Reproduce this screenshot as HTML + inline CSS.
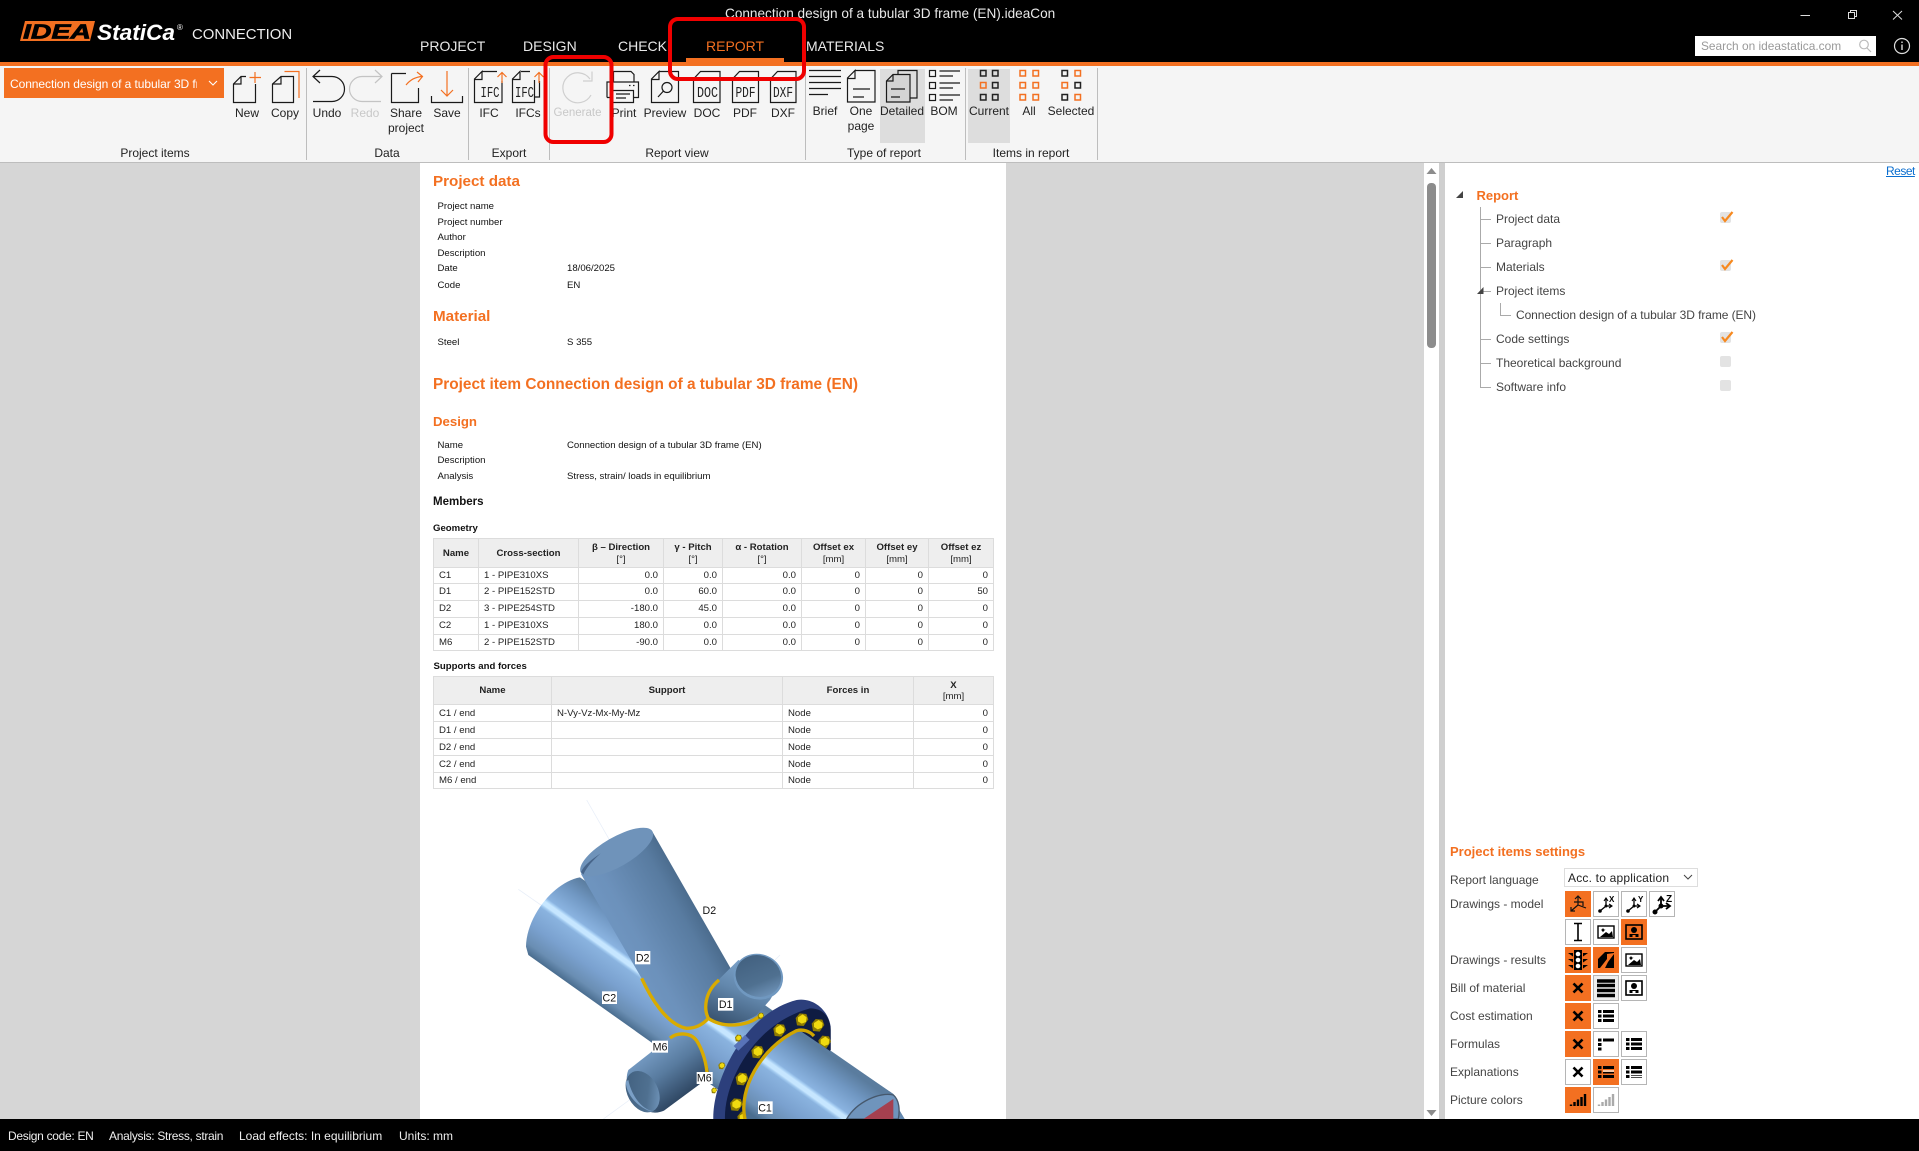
<!DOCTYPE html>
<html lang="en"><head><meta charset="utf-8"><title>Connection design of a tubular 3D frame (EN).ideaCon</title>
<style>
*{box-sizing:border-box}
html,body{margin:0;padding:0;width:1919px;height:1151px;overflow:hidden;background:#d6d6d6;font-family:"Liberation Sans",Arial,sans-serif}
.a{position:absolute}
.t{position:absolute;white-space:nowrap;line-height:16px;height:16px}
.m{position:absolute;top:38px;font-size:14px;line-height:16px;color:#e8e8e8;white-space:nowrap}
.l{position:absolute;transform:translateX(-50%);font-size:12px;line-height:15px;color:#222;white-space:nowrap;text-align:center}
.g{position:absolute;top:145px;transform:translateX(-50%);font-size:12px;line-height:16px;color:#222;white-space:nowrap}
.s{position:absolute;top:68px;width:1px;height:92px;background:#bdbdbd}
.r{position:absolute;font-size:9.6px;line-height:12px;color:#111;white-space:nowrap}
.h1{position:absolute;left:433px;font-weight:bold;color:#f37021;white-space:nowrap;line-height:20px}
.tr{position:absolute;left:1496px;font-size:12px;line-height:16px;color:#444;white-space:nowrap}
.ls{position:absolute;left:1450px;font-size:12px;line-height:16px;color:#444;white-space:nowrap}
table{position:absolute;left:433px;border-collapse:collapse;table-layout:fixed;font-size:9.6px;color:#222;width:560px}
td,th{border:1px solid #dcdcdc;padding:0 5px;line-height:11.5px;overflow:hidden;white-space:nowrap}
th{background:#eeeeee;text-align:center;font-weight:bold;padding-top:1px}
th span{font-weight:normal}
td.n{text-align:right}
.t2 td{padding-top:1px}
.chk{position:absolute;left:1720px;width:11px;height:11px;background:#e3e3e3;border-radius:2px}
</style></head><body>

<div class="a" style="left:0;top:0;width:1919px;height:62px;background:#000"></div>
<div class="a" style="left:0;top:62px;width:1919px;height:4px;background:#f37021"></div>
<div class="a" style="left:0;top:66px;width:1919px;height:96px;background:#f5f5f5"></div>
<div class="a" style="left:0;top:162px;width:1919px;height:1px;background:#bdbdbd"></div>
<div class="a" style="left:0;top:163px;width:1919px;height:957px;background:#d6d6d6"></div>

<div class="t" style="left:725px;top:6px;font-size:13.6px;color:#e8e8e8">Connection design of a tubular 3D frame (EN).ideaCon</div>
<div class="t" style="left:192px;top:27px;font-size:14.9px;color:#eee">CONNECTION</div>
<div class="m" style="left:420px">PROJECT</div>
<div class="m" style="left:523px">DESIGN</div>
<div class="m" style="left:618px">CHECK</div>
<div class="m" style="left:706px;color:#f37021">REPORT</div>
<div class="a" style="left:686px;top:58px;width:98px;height:4px;background:#f37021"></div>
<div class="m" style="left:806px">MATERIALS</div>

<div class="a" style="left:1695px;top:36px;width:181px;height:20px;background:#fff"></div>
<div class="t" style="left:1701px;top:38px;font-size:11.9px;color:#999">Search on ideastatica.com</div>

<div class="a" style="left:4px;top:68px;width:220px;height:30px;background:#f37021"></div>
<div class="t" style="left:10px;top:76px;width:187px;overflow:hidden;font-size:12px;color:#fff;letter-spacing:-.07px">Connection design of a tubular 3D frame (EN)</div>

<div class="l" style="left:247px;top:106px">New</div>
<div class="l" style="left:285px;top:106px">Copy</div>
<div class="l" style="left:327px;top:106px">Undo</div>
<div class="l" style="left:365px;top:106px;color:#c8c8c8">Redo</div>
<div class="l" style="left:406px;top:106px">Share<br>project</div>
<div class="l" style="left:447px;top:106px">Save</div>
<div class="l" style="left:489px;top:106px">IFC</div>
<div class="l" style="left:528px;top:106px">IFCs</div>
<div class="l" style="left:577.5px;top:106px;color:#c8c8c8;font-size:11.5px">Generate</div>
<div class="l" style="left:624px;top:106px">Print</div>
<div class="l" style="left:665px;top:106px">Preview</div>
<div class="l" style="left:707px;top:106px">DOC</div>
<div class="l" style="left:745px;top:106px">PDF</div>
<div class="l" style="left:783px;top:106px">DXF</div>
<div class="a" style="left:880px;top:69px;width:45px;height:74px;background:#dddddd"></div>
<div class="a" style="left:968px;top:69px;width:42px;height:74px;background:#dddddd"></div>
<div class="l" style="left:825px;top:104px">Brief</div>
<div class="l" style="left:861px;top:104px">One<br>page</div>
<div class="l" style="left:902px;top:104px">Detailed</div>
<div class="l" style="left:944px;top:104px">BOM</div>
<div class="l" style="left:989px;top:104px">Current</div>
<div class="l" style="left:1029px;top:104px">All</div>
<div class="l" style="left:1071px;top:104px">Selected</div>

<div class="g" style="left:155px">Project items</div>
<div class="g" style="left:387px">Data</div>
<div class="g" style="left:509px">Export</div>
<div class="g" style="left:677px">Report view</div>
<div class="g" style="left:884px">Type of report</div>
<div class="g" style="left:1031px">Items in report</div>
<div class="s" style="left:306px"></div><div class="s" style="left:468px"></div><div class="s" style="left:549px"></div><div class="s" style="left:805px"></div><div class="s" style="left:965px"></div><div class="s" style="left:1097px"></div>

<!-- report page -->
<div class="a" style="left:420px;top:163px;width:585.5px;height:957px;background:#fff"></div>
<div class="h1" style="top:172px;font-size:15.2px">Project data</div>
<div class="r" style="left:437.5px;top:201px">Project name</div>
<div class="r" style="left:437.5px;top:217px">Project number</div>
<div class="r" style="left:437.5px;top:232px">Author</div>
<div class="r" style="left:437.5px;top:248px">Description</div>
<div class="r" style="left:437.5px;top:263px">Date</div><div class="r" style="left:567px;top:263px">18/06/2025</div>
<div class="r" style="left:437.5px;top:280px">Code</div><div class="r" style="left:567px;top:280px">EN</div>
<div class="h1" style="top:307px;font-size:15.2px">Material</div>
<div class="r" style="left:437.5px;top:337px">Steel</div><div class="r" style="left:567px;top:337px">S 355</div>
<div class="h1" style="top:375px;font-size:15.4px">Project item Connection design of a tubular 3D frame (EN)</div>
<div class="h1" style="top:412px;font-size:13.2px">Design</div>
<div class="r" style="left:437.5px;top:440px">Name</div><div class="r" style="left:567px;top:440px">Connection design of a tubular 3D frame (EN)</div>
<div class="r" style="left:437.5px;top:455px">Description</div>
<div class="r" style="left:437.5px;top:471px">Analysis</div><div class="r" style="left:567px;top:471px">Stress, strain/ loads in equilibrium</div>
<div class="r" style="left:433px;top:495px;font-size:11.5px;font-weight:bold;line-height:14px">Members</div>
<div class="r" style="left:433px;top:522.5px;font-weight:bold">Geometry</div>

<table style="top:538px">
<colgroup><col style="width:45px"><col style="width:100px"><col style="width:85px"><col style="width:59px"><col style="width:79px"><col style="width:64px"><col style="width:63px"><col style="width:65px"></colgroup>
<tr style="height:29px"><th>Name</th><th>Cross-section</th><th>β – Direction<br><span>[°]</span></th><th>γ - Pitch<br><span>[°]</span></th><th>α - Rotation<br><span>[°]</span></th><th>Offset ex<br><span>[mm]</span></th><th>Offset ey<br><span>[mm]</span></th><th>Offset ez<br><span>[mm]</span></th></tr>
<tr style="height:16px"><td>C1</td><td>1 - PIPE310XS</td><td class="n">0.0</td><td class="n">0.0</td><td class="n">0.0</td><td class="n">0</td><td class="n">0</td><td class="n">0</td></tr>
<tr style="height:17px"><td>D1</td><td>2 - PIPE152STD</td><td class="n">0.0</td><td class="n">60.0</td><td class="n">0.0</td><td class="n">0</td><td class="n">0</td><td class="n">50</td></tr>
<tr style="height:17px"><td>D2</td><td>3 - PIPE254STD</td><td class="n">-180.0</td><td class="n">45.0</td><td class="n">0.0</td><td class="n">0</td><td class="n">0</td><td class="n">0</td></tr>
<tr style="height:17px"><td>C2</td><td>1 - PIPE310XS</td><td class="n">180.0</td><td class="n">0.0</td><td class="n">0.0</td><td class="n">0</td><td class="n">0</td><td class="n">0</td></tr>
<tr style="height:16px"><td>M6</td><td>2 - PIPE152STD</td><td class="n">-90.0</td><td class="n">0.0</td><td class="n">0.0</td><td class="n">0</td><td class="n">0</td><td class="n">0</td></tr>
</table>

<div class="r" style="left:433.5px;top:661px;font-weight:bold">Supports and forces</div>

<table class="t2" style="top:676px">
<colgroup><col style="width:118px"><col style="width:231px"><col style="width:131px"><col style="width:80px"></colgroup>
<tr style="height:28px"><th>Name</th><th>Support</th><th>Forces in</th><th>X<br><span>[mm]</span></th></tr>
<tr style="height:17px"><td>C1 / end</td><td>N-Vy-Vz-Mx-My-Mz</td><td>Node</td><td class="n">0</td></tr>
<tr style="height:17px"><td>D1 / end</td><td></td><td>Node</td><td class="n">0</td></tr>
<tr style="height:17px"><td>D2 / end</td><td></td><td>Node</td><td class="n">0</td></tr>
<tr style="height:17px"><td>C2 / end</td><td></td><td>Node</td><td class="n">0</td></tr>
<tr style="height:16px"><td>M6 / end</td><td></td><td>Node</td><td class="n">0</td></tr>
</table>

<!-- 3D model -->
<svg class="a" style="left:480px;top:800px" width="480" height="319" viewBox="0 0 1440 957">
<defs>
<linearGradient id="gm" gradientUnits="userSpaceOnUse" x1="500" y1="374" x2="337" y2="602">
<stop offset="0" stop-color="#5a7c9e"/><stop offset=".18" stop-color="#7097c2"/><stop offset=".39" stop-color="#8ab3e0"/><stop offset=".41" stop-color="#a5cdf2"/><stop offset=".43" stop-color="#c6e6ff"/><stop offset=".47" stop-color="#c6e6ff"/><stop offset=".49" stop-color="#a0c8ee"/><stop offset=".51" stop-color="#8ab3df"/><stop offset=".72" stop-color="#7aa1cf"/><stop offset=".9" stop-color="#6a8eb3"/><stop offset="1" stop-color="#4a6d8f"/>
</linearGradient>
<linearGradient id="gd" gradientUnits="userSpaceOnUse" x1="700" y1="250" x2="380" y2="430">
<stop offset="0" stop-color="#36536f"/><stop offset=".35" stop-color="#587ba0"/><stop offset=".75" stop-color="#6c91bb"/><stop offset="1" stop-color="#7097c2"/>
</linearGradient>
<linearGradient id="gt" gradientUnits="userSpaceOnUse" x1="810" y1="480" x2="730" y2="680">
<stop offset="0" stop-color="#7ea5cd"/><stop offset=".45" stop-color="#6388ad"/><stop offset="1" stop-color="#36506d"/>
</linearGradient>
<linearGradient id="gs" gradientUnits="userSpaceOnUse" x1="500" y1="740" x2="610" y2="890">
<stop offset="0" stop-color="#7aa0c9"/><stop offset=".5" stop-color="#587b9f"/><stop offset="1" stop-color="#2f4763"/>
</linearGradient>
<linearGradient id="gi" x1="0" y1="0" x2="1" y2="1">
<stop offset="0" stop-color="#3f5d7c"/><stop offset=".6" stop-color="#4f7090"/><stop offset="1" stop-color="#7da3cb"/>
</linearGradient>
<g id="bolt"><polygon points="-18,-6 -6,-20 14,-18 20,-2 6,18 -14,16" fill="#8f7c00"/><polygon points="-11,-8 3,-17 15,-8 13,6 0,11 -11,4" fill="#f0da10"/></g>
</defs>
<g stroke="#e6edf8" stroke-width="2" fill="none"><path d="M320 0L400 140"/><path d="M115 268L190 320"/><path d="M370 957L455 895"/><path d="M885 480L900 465"/></g>
<path fill="url(#gm)" d="M300 232C225 245 140 345 138 440L145 465L800 930L900 1000L1300 1000L1258 930L1240 882Z"/>
<path fill="url(#gd)" d="M303 222L485 535C510 590 560 670 620 685C650 685 675 670 690 650L775 520L752 505L517 95C470 92 340 160 303 222Z"/>
<ellipse cx="410" cy="156" rx="124" ry="44" transform="rotate(-30 410 156)" fill="#6f93ba"/>
<path d="M303 216C312 196 335 178 362 160C340 180 320 200 310 224Z" fill="#47658a"/>
<path d="M485 535C510 590 560 675 620 685C650 685 670 672 685 655" fill="none" stroke="#d9ab00" stroke-width="10"/>
<path fill="url(#gs)" d="M570 712L445 810C425 860 470 935 525 938C535 938 545 935 552 932L690 830C680 770 655 715 610 698C595 698 580 702 570 712Z"/>
<ellipse cx="488" cy="875" rx="46" ry="66" transform="rotate(-28 488 875)" fill="url(#gi)"/>
<path d="M445 840C455 890 490 935 530 935C500 940 440 900 437 845Z" fill="#7a9fc6"/>
<path d="M570 714C590 698 630 695 650 722C668 750 680 790 682 830" fill="none" stroke="#d9ab00" stroke-width="10"/>
<path fill="url(#gt)" d="M715 540L775 480L905 540L870 600L830 645C790 672 730 680 685 655C670 625 680 575 715 540Z"/>
<ellipse cx="835" cy="530" rx="75" ry="68" transform="rotate(20 835 530)" fill="#7098c0"/>
<ellipse cx="835" cy="528" rx="69" ry="62" transform="rotate(20 835 528)" fill="url(#gi)"/>
<path d="M840 648C800 680 730 685 685 655C670 625 675 575 717 540" fill="none" stroke="#d9ab00" stroke-width="10"/>
<path fill="#2c3f7c" d="M700 960C695 850 790 640 950 600C1000 592 1045 630 1052 680L1052 750L1000 800L800 960Z"/>
<path fill="#0f1c42" d="M735 960C730 850 820 670 990 625C1030 625 1050 650 1052 690L1052 750L900 900L800 960Z"/>
<path d="M768 745L802 712" stroke="#5873b8" stroke-width="20"/>
<use href="#bolt" transform="translate(775 715) scale(.55)"/><use href="#bolt" transform="translate(725 798) scale(.55)"/><use href="#bolt" transform="translate(702 872) scale(.45)"/><use href="#bolt" transform="translate(842 648) scale(.5)"/>
<use href="#bolt" transform="translate(965 660)"/><use href="#bolt" transform="translate(1013 677)"/><use href="#bolt" transform="translate(1033 727)"/><use href="#bolt" transform="translate(898 692)"/><use href="#bolt" transform="translate(832 757)"/><use href="#bolt" transform="translate(785 838)"/><use href="#bolt" transform="translate(768 915)"/><use href="#bolt" transform="translate(790 955)"/>
<path fill="url(#gm)" d="M800 960C775 870 840 745 960 692L1240 882C1258 900 1262 930 1255 960Z"/>
<path d="M795 957C775 870 840 745 950 692C970 686 990 695 1002 708" fill="none" stroke="#d0a500" stroke-width="10"/>
<path d="M1100 957C1130 905 1200 875 1240 885C1258 900 1260 930 1255 957Z" fill="#6f94bc" stroke="#46586c" stroke-width="4"/>
<path d="M1150 957L1240 897L1240 957Z" fill="#a5404f"/>
<g font-family="Liberation Sans,Arial,sans-serif" font-size="32" fill="#111" text-anchor="middle">
<text x="688" y="342">D2</text>
<rect x="465" y="453" width="46" height="40" fill="#fff"/><text x="488" y="484">D2</text>
<rect x="366" y="574" width="45" height="38" fill="#fff"/><text x="388" y="604">C2</text>
<rect x="714" y="594" width="46" height="38" fill="#fff"/><text x="737" y="624">D1</text>
<rect x="516" y="722" width="48" height="36" fill="#fff"/><text x="540" y="751">M6</text>
<rect x="650" y="816" width="48" height="36" fill="#fff"/><text x="673" y="845">M6</text>
<rect x="834" y="904" width="44" height="38" fill="#fff"/><text x="855" y="934">C1</text>
</g>
</svg>

<!-- scrollbar + right panel -->
<div class="a" style="left:1424px;top:163px;width:15px;height:957px;background:#fff"></div>
<div class="a" style="left:1427px;top:183px;width:9px;height:165px;background:#8c8c8c;border-radius:4px"></div>
<div class="a" style="left:1439px;top:163px;width:6px;height:957px;background:#cfcfcf"></div>
<div class="a" style="left:1445px;top:163px;width:474px;height:957px;background:#fff"></div>
<div class="t" style="left:1886px;top:163px;font-size:12px;letter-spacing:-.5px;color:#0a6ecf;text-decoration:underline">Reset</div>

<div class="t" style="left:1476.5px;top:188px;font-size:13px;font-weight:bold;color:#f37021">Report</div>
<div class="tr" style="top:211px">Project data</div>
<div class="tr" style="top:235px">Paragraph</div>
<div class="tr" style="top:259px">Materials</div>
<div class="tr" style="top:283px">Project items</div>
<div class="tr" style="top:307px;left:1516px;letter-spacing:-.08px">Connection design of a tubular 3D frame (EN)</div>
<div class="tr" style="top:331px">Code settings</div>
<div class="tr" style="top:355px">Theoretical background</div>
<div class="tr" style="top:379px">Software info</div>
<div class="chk" style="top:212px"></div><div class="chk" style="top:260px"></div><div class="chk" style="top:332px"></div><div class="chk" style="top:356px"></div><div class="chk" style="top:380px"></div>

<div class="t" style="left:1450px;top:844px;font-size:13px;font-weight:bold;color:#f37021">Project items settings</div>
<div class="ls" style="top:872px">Report language</div>
<div class="ls" style="top:896px">Drawings - model</div>
<div class="ls" style="top:952px">Drawings - results</div>
<div class="ls" style="top:980px">Bill of material</div>
<div class="ls" style="top:1008px">Cost estimation</div>
<div class="ls" style="top:1036px">Formulas</div>
<div class="ls" style="top:1064px">Explanations</div>
<div class="ls" style="top:1092px">Picture colors</div>
<div class="a" style="left:1564px;top:868px;width:134px;height:19px;background:#fff;border:1px solid #ddd"></div>
<div class="t" style="left:1568px;top:870px;font-size:12px;letter-spacing:.2px;color:#222">Acc. to application</div>

<!-- status bar -->
<div class="a" style="left:0;top:1119px;width:1919px;height:32px;background:#000"></div>
<div class="t" style="left:8px;top:1128px;font-size:12px;letter-spacing:-.3px;color:#eee">Design code: EN</div>
<div class="t" style="left:109px;top:1128px;font-size:12px;letter-spacing:-.3px;color:#eee">Analysis: Stress, strain</div>
<div class="t" style="left:239px;top:1128px;font-size:12px;color:#eee">Load effects: In equilibrium</div>
<div class="t" style="left:399px;top:1128px;font-size:12px;color:#eee">Units: mm</div>

<!-- vector overlay: logo, icons, tree lines, red boxes -->
<svg class="a" style="left:0;top:0" width="1919" height="1151" viewBox="0 0 1919 1151">
<defs>
<g id="x"><path d="M8.5 8.5L17.5 17.5M17.5 8.5L8.5 17.5" stroke="#000" stroke-width="2.6" fill="none"/></g>
<g id="list"><path d="M5 8.5h3.5M5 13h3.5M5 17.5h3.5" stroke="#000" stroke-width="3"/><path d="M10 8.5h11M10 13h11M10 17.5h11" stroke="#000" stroke-width="3"/></g>
<g id="pic"><rect x="5" y="7" width="16" height="12" fill="#fff" stroke="#000" stroke-width="1.4"/><path d="M7 18L13 13L16 15L19 12L20 18Z" fill="#000"/><path d="M9 10.5l1-1.5 1 1.5 1.5.3-1.5 1-1 1.5-1-1.5-1.2-1z" fill="#000"/></g>
<g id="per"><rect x="5" y="6" width="16" height="14" fill="none" stroke="#000" stroke-width="1.6"/><circle cx="13" cy="11" r="3" fill="#000"/><path d="M8.5 18v-3h9v3h-3v-2h-3v2z" fill="#000"/></g>
<g id="bars"><path d="M6 19v-1.5M9.5 19v-4M13 19v-6.5M16.5 19v-9M20 19v-12" stroke-width="2.4" fill="none"/></g>
<g id="ax"><path d="M13 8V15L18 15M13 15L7 20" stroke="#000" stroke-width="1.3" fill="none"/><circle cx="7" cy="20" r="1.8" fill="#000"/><circle cx="13" cy="15" r="1.5" fill="#000"/></g>
</defs>

<!-- logo -->
<path d="M25 21H95L90 41H20Z" fill="#f37021"/>
<text x="23" y="38.5" font-family="Liberation Sans,Arial,sans-serif" font-size="20" font-weight="bold" font-style="italic" fill="#000" stroke="#000" stroke-width=".7" textLength="68" lengthAdjust="spacingAndGlyphs">IDEA</text>
<text x="97" y="40" font-family="Liberation Sans,Arial,sans-serif" font-size="22" font-weight="bold" font-style="italic" fill="#fff" textLength="78" lengthAdjust="spacingAndGlyphs">StatiCa</text>
<text x="177" y="30" font-family="Liberation Sans,Arial,sans-serif" font-size="8" fill="#fff">®</text>

<!-- window controls -->
<g stroke="#ddd" stroke-width="1" fill="none">
<path d="M1800.5 15.5H1810"/>
<rect x="1848.5" y="12.5" width="6" height="6"/><path d="M1850.5 12V10.5H1856.5V16.5H1855"/>
<path d="M1893 11L1902 19.5M1902 11L1893 19.5"/>
<circle cx="1902" cy="46" r="7.5" stroke-width="1.2"/><path d="M1902 44.5V50M1902 41.5V43" stroke-width="1.4"/>
</g>
<g stroke="#bbb" stroke-width="1.2" fill="none"><circle cx="1864" cy="44.5" r="4.3"/><path d="M1867 48L1871 52"/></g>
<path d="M209 81L213 85L217 81" fill="none" stroke="#fff" stroke-width="1.1"/>

<!-- ribbon icons -->
<g fill="none" stroke="#1a1a1a" stroke-width="1.2">
<path d="M246 76.5H241L233.5 84V102.5H255.5V84"/><path d="M241 77V84H234"/>
<path d="M281 76.5L272.5 84V102.5H293.5V76.5Z"/><path d="M281 77V84H273" />
<path d="M313 76.5H332A12.5 12.5 0 0 1 332 101.5H313M320 70L313 76.5L320 83"/>
<path d="M391.5 73.5H406M418.5 88V102.5H391.5V73.5"/>
<path d="M431.5 96V102.5H462.5V96"/>
<path d="M482 71.5H497M502 81V102.5H474.5V79L482 71.5V79.5H475"/>
<path d="M521 71.5H530M534.5 80V102.5H512.5V79L520 71.5V79.5H513M534.5 97H539.5V81"/>
<!-- print -->
<path d="M613.5 82V71.5H631L634 74.5V82M607 97.5V82H638.5V97.5H633M612.5 97.5H607"/>
<path d="M612.5 90.5H633.5V102.5H612.5Z" fill="#f5f5f5"/><path d="M616 94H630M616 98H626M629 85.5h1.5M633 85.5h1.5"/>
<!-- preview -->
<path d="M659 71.5H678.5V102.5H651.5V79L659 71.5V79.5H652"/><circle cx="667" cy="87.5" r="5"/><path d="M663.5 91L658 97"/>
<!-- doc pdf dxf -->
<path d="M700.5 71.5H720V102.5H693.5V79Z"/><path d="M739.5 71.5H758.5V102.5H732.5V79Z"/><path d="M777.5 71.5H796V102.5H770.5V79Z"/>
<!-- brief -->
<path d="M809 70.5H841M809 76.5H841M809 82.5H841M809 88.5H841M809 94.5H828"/>
<!-- one page -->
<path d="M855 70.5H875V102H847.5V78L855 70.5V78.5H848M853 89H870M853 97H864"/>
<!-- detailed -->
<path d="M898 74V70.5H917V98H910"/>
<path d="M893 74.5H910V102H886.5V81L893 74.5Z" fill="#d4d4d4"/><path d="M893 75V81H887M891 89H905M891 97H900"/>
<!-- bom -->
<rect x="929.5" y="70.5" width="6" height="6"/><rect x="929.5" y="82.5" width="6" height="6"/><rect x="929.5" y="94.5" width="6" height="6"/>
<path d="M939.5 71H960M939.5 76H953M939.5 83H960M939.5 88H953M939.5 95H960M939.5 100H953"/>
</g>
<g fill="none" stroke="#f37021" stroke-width="1.2">
<path d="M255 72V83M249.5 77.5H261"/>
<path d="M284.5 71.5H299V98"/>
<path d="M406 85C410 80 415 77 422 76.5M417 72L422.5 76.5L418 82"/>
<path d="M447 71V96M441 90L447 96L453 90"/>
<path d="M502 83V72.5M497.5 77L502 72.5L506.5 77"/>
<path d="M539 83V72.5M534.5 77L539 72.5L543.5 77"/>
</g>
<path d="M382 76.5H362A12.5 12.5 0 0 0 362 101.5H381M375 70L382 76.5L375 83" fill="none" stroke="#c4c4c4" stroke-width="1.2"/>
<path d="M590 79A15 15 0 1 0 591 95" fill="none" stroke="#cfcfcf" stroke-width="1.2"/><path d="M592 71.5V81H583" fill="none" stroke="#cfcfcf" stroke-width="1.2"/>
<g font-family="Liberation Mono,monospace" font-size="15" fill="#222" text-anchor="middle">
<text x="490" y="97" textLength="19" lengthAdjust="spacingAndGlyphs">IFC</text>
<text x="524.5" y="97" textLength="19" lengthAdjust="spacingAndGlyphs">IFC</text>
<text x="707.5" y="97" textLength="21" lengthAdjust="spacingAndGlyphs">DOC</text>
<text x="745.5" y="97" textLength="20" lengthAdjust="spacingAndGlyphs">PDF</text>
<text x="783" y="97" textLength="20" lengthAdjust="spacingAndGlyphs">DXF</text>
</g>
<!-- items squares -->
<g fill="none" stroke-width="1.5" stroke="#222">
<rect x="980.5" y="70.5" width="5.5" height="5.5"/><rect x="992.5" y="70.5" width="5.5" height="5.5"/>
<rect x="980.5" y="82.5" width="5.5" height="5.5" stroke="#f37021"/><rect x="992.5" y="82.5" width="5.5" height="5.5"/>
<rect x="980.5" y="94.5" width="5.5" height="5.5"/><rect x="992.5" y="94.5" width="5.5" height="5.5"/>
<g stroke="#f37021"><rect x="1020" y="70.5" width="5.5" height="5.5"/><rect x="1033" y="70.5" width="5.5" height="5.5"/><rect x="1020" y="82.5" width="5.5" height="5.5"/><rect x="1033" y="82.5" width="5.5" height="5.5"/><rect x="1020" y="94.5" width="5.5" height="5.5"/><rect x="1033" y="94.5" width="5.5" height="5.5"/></g>
<rect x="1062" y="70.5" width="5.5" height="5.5"/><rect x="1075" y="70.5" width="5.5" height="5.5" stroke="#f37021"/>
<rect x="1062" y="82.5" width="5.5" height="5.5" stroke="#f37021"/><rect x="1075" y="82.5" width="5.5" height="5.5"/>
<rect x="1062" y="94.5" width="5.5" height="5.5"/><rect x="1075" y="94.5" width="5.5" height="5.5" stroke="#f37021"/>
</g>

<!-- scroll arrows -->
<path d="M1431.5 168L1426.5 174H1436.5Z" fill="#8c8c8c"/><path d="M1431.5 1116L1426.5 1110H1436.5Z" fill="#8c8c8c"/>

<!-- tree -->
<path d="M1463 191V198H1456Z" fill="#444"/>
<g stroke="#aaa" fill="none"><path d="M1480.5 207V387.5H1491M1481 219.5H1491M1481 243.5H1491M1481 267.5H1491M1481 291.5H1491M1481 339.5H1491M1481 363.5H1491M1500.5 303V315.5H1511"/></g>
<path d="M1483.5 287V294H1477Z" fill="#444"/>
<g fill="none" stroke="#f7891f" stroke-width="2.2"><path d="M1722 217L1725 221L1732.5 212"/><path d="M1722 265L1725 269L1732.5 260"/><path d="M1722 337L1725 341L1732.5 332"/></g>

<!-- select chevron -->
<path d="M1684 875L1688 879L1692 875" fill="none" stroke="#444" stroke-width="1"/>

<!-- setting buttons -->
<g stroke="#b5b5b5" stroke-width="1" fill="#fff">
<rect x="1593.5" y="891.5" width="25" height="25"/><rect x="1621.5" y="891.5" width="25" height="25"/><rect x="1649.5" y="891.5" width="25" height="25"/>
<rect x="1565.5" y="919.5" width="25" height="25"/><rect x="1593.5" y="919.5" width="25" height="25"/>
<rect x="1621.5" y="947.5" width="25" height="25"/>
<rect x="1593.5" y="975.5" width="25" height="25" fill="#eee"/><rect x="1621.5" y="975.5" width="25" height="25"/>
<rect x="1593.5" y="1003.5" width="25" height="25"/>
<rect x="1593.5" y="1031.5" width="25" height="25"/><rect x="1621.5" y="1031.5" width="25" height="25"/>
<rect x="1565.5" y="1059.5" width="25" height="25"/><rect x="1621.5" y="1059.5" width="25" height="25"/>
<rect x="1593.5" y="1087.5" width="25" height="25"/>
</g>
<g fill="#f37021">
<rect x="1565" y="891" width="26" height="26"/><rect x="1621" y="919" width="26" height="26"/>
<rect x="1565" y="947" width="26" height="26"/><rect x="1593" y="947" width="26" height="26"/>
<rect x="1565" y="975" width="26" height="26"/><rect x="1565" y="1003" width="26" height="26"/><rect x="1565" y="1031" width="26" height="26"/>
<rect x="1593" y="1059" width="26" height="26"/><rect x="1565" y="1087" width="26" height="26"/>
</g>
<!-- row 1 -->
<g transform="translate(1565 891)" fill="none" stroke="#111" stroke-width="1.2"><path d="M13 6V14M13 14L6 20M13 14L21 17M9 11L18 11L18 15M10 8l3-3 3 3M6 16v4h4"/></g>
<use href="#ax" x="1593" y="891"/><path d="M1606 893 M1604 901l2-3 2 3M1609 904l3 2-3 2" fill="none" stroke="#000" stroke-width="1.1"/>
<use href="#ax" x="1621" y="891"/><path d="M1632 901l2-3 2 3M1637 904l3 2-3 2" fill="none" stroke="#000" stroke-width="1.1"/>
<g transform="translate(1649 891)" fill="none" stroke="#000" stroke-width="1.8"><path d="M12 7V15L20 15M12 15L6 21"/><circle cx="6" cy="21" r="1.6" fill="#000"/><circle cx="12" cy="15" r="1.6" fill="#000"/><path d="M9 10l3-4 3 4M17 12l4 3-4 3"/></g>
<g font-family="Liberation Sans,Arial,sans-serif" font-weight="bold" fill="#000">
<text x="1609" y="902" font-size="8">X</text><text x="1638" y="902" font-size="8">Y</text><text x="1666" y="902" font-size="10">Z</text>
</g>
<!-- row 2 -->
<path d="M1578 924V940M1574 923.5H1582M1574 940.5H1582" stroke="#000" stroke-width="1.6" fill="none"/>
<use href="#pic" x="1593" y="919"/><use href="#per" x="1621" y="919"/>
<!-- row 3 -->
<g transform="translate(1565 947)"><rect x="9" y="3" width="8" height="20" fill="#000"/><path d="M3 6h5v3.5zM23 6h-5v3.5zM3 12h5v3.5zM23 12h-5v3.5zM3 18h5v3.5zM23 18h-5v3.5z" fill="#000"/><circle cx="13" cy="7" r="2.3" fill="#fff"/><circle cx="13" cy="13" r="2.3" fill="#fff"/><circle cx="13" cy="19" r="2.3" fill="#fff"/></g>
<g transform="translate(1593 947)"><rect x="5" y="5" width="16" height="16" fill="#000"/><path d="M7 21L14 12V7L21 6V7L15 15L12 21Z" fill="#f37021"/><path d="M5 5h7L5 12Z" fill="#f37021"/></g>
<use href="#pic" x="1621" y="947"/>
<!-- row 4 -->
<use href="#x" x="1565" y="975"/>
<path d="M1597 980.5H1615M1597 985H1615M1597 990H1615M1597 995H1615" stroke="#000" stroke-width="3.4" transform="translate(0 .5)"/>
<use href="#per" x="1621" y="975"/>
<!-- row 5 -->
<use href="#x" x="1565" y="1003"/><use href="#list" x="1593" y="1003"/>
<!-- row 6 -->
<use href="#x" x="1565" y="1031"/>
<path d="M1598 1040h3.5M1598 1044.5h3.5M1598 1049h3.5M1603 1040h11" stroke="#000" stroke-width="3"/>
<use href="#list" x="1621" y="1031"/>
<!-- row 7 -->
<use href="#x" x="1565" y="1059"/><use href="#list" x="1593" y="1059"/><path d="M1603 1071h11" stroke="#f8c9a8" stroke-width="2"/>
<use href="#list" x="1621" y="1059"/><path d="M1631 1076.5h11" stroke="#fff" stroke-width="1.6"/>
<!-- row 8 -->
<use href="#bars" x="1565" y="1087" stroke="#000"/><use href="#bars" x="1593" y="1087" stroke="#aaa"/>

<!-- red annotation boxes -->
<g fill="none" stroke="#f00000" stroke-width="4">
<rect x="670" y="19" width="134" height="60" rx="8"/>
<rect x="545.5" y="57" width="66" height="85" rx="8"/>
</g>
</svg>
</body></html>
